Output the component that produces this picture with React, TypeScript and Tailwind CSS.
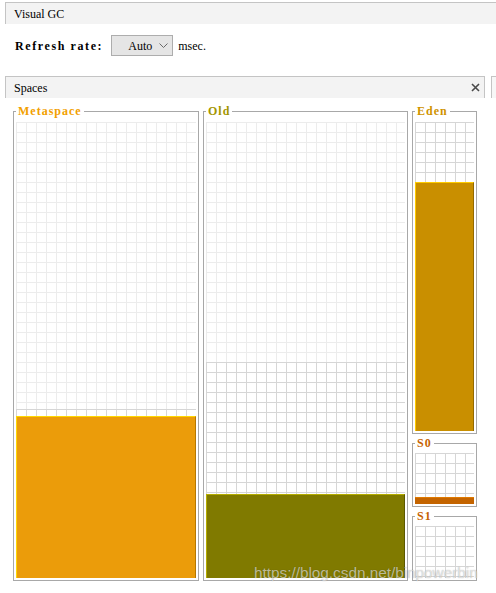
const lightGrid =
  "[background-image:linear-gradient(to_right,#ececec_1px,transparent_1px),linear-gradient(to_bottom,#ececec_1px,transparent_1px)] [background-size:10px_10px]";
const darkGrid =
  "[background-image:linear-gradient(to_right,#d6d6d6_1px,transparent_1px),linear-gradient(to_bottom,#d6d6d6_1px,transparent_1px)] [background-size:10px_10px]";

interface SpaceProps {
  label: string;
  labelClass: string;
  free: number;
  used: number;
  fillClass: string;
  className: string;
  top?: string;
  body?: number;
}

function Space({ label, labelClass, free, used, fillClass, className, top = "pt-[4px]", body }: SpaceProps) {
  return (
    <fieldset className={`flex flex-col min-w-0 border border-[#a8a8a8] px-[2px] pb-[2px] ${top} ${className}`}>
      <legend className={`px-[2px] text-[12px] leading-[13px] font-bold tracking-[1px] ${labelClass}`}>{label}</legend>
      {free > 0 && <div className={lightGrid} style={{ height: free }} />}
      <div
        className={`${body ? "shrink-0" : "flex-1"} flex flex-col justify-end ${darkGrid}`}
        style={body ? { height: body, minHeight: body } : undefined}
      >
        {used > 0 && <div className={`shrink-0 ${fillClass}`} style={{ height: used }} />}
      </div>
    </fieldset>
  );
}

export default function App() {
  return (
    <div className="relative w-[496px] h-[593px] overflow-hidden bg-white text-black font-['Liberation_Serif',serif]">
      <div className="pt-[2px] pl-[5px]">
        <div className="h-[22px] flex items-center border-t border-l border-[#c4c4c4] bg-[#f3f3f3] pl-[8px] text-[12px]">
          Visual GC
        </div>
      </div>

      <div className="mt-[11px] pl-[15px] h-[21px] flex items-center">
        <span className="text-[12px] font-bold tracking-[1.6px]">Refresh rate:</span>
        <div className="ml-[8px] w-[62px] h-[21px] flex items-center border border-[#adadad] bg-[#e5e5e5] pl-[16px] text-[12px]">
          <span>Auto</span>
          <svg className="ml-[7px]" width="9" height="6" viewBox="0 0 9 6">
            <polyline points="0.5,0.5 4.5,4.5 8.5,0.5" fill="none" stroke="#6a6a6a" strokeWidth="1" />
          </svg>
        </div>
        <span className="ml-[5px] text-[12px]">msec.</span>
      </div>

      <div className="mt-[20px] pl-[5px] flex h-[22px]">
        <div className="w-[480px] flex items-center justify-between border-t border-l border-r border-[#c4c4c4] bg-[#f3f3f3] pl-[8px] pr-[4px] text-[12px]">
          <span>Spaces</span>
          <svg width="9" height="9" viewBox="0 0 9 9">
            <path d="M1 1 L8 8 M8 1 L1 8" stroke="#4a4a4a" strokeWidth="1.6" />
          </svg>
        </div>
        <div className="ml-[6px] flex-1 border-t border-l border-[#c4c4c4] bg-[#f7f7f7]" />
      </div>

      <div className="mt-[7px] pl-[13px] h-[476px] flex gap-[4px]">
        <Space
          label="Metaspace"
          labelClass="text-[#f2a000]"
          free={287}
          used={162}
          className="w-[186px]"
          fillClass="bg-[#eb9c0a] border-t border-l border-r border-t-[#ffd800] border-l-[#ffd800] border-r-[#b67800]"
        />
        <Space
          label="Old"
          labelClass="text-[#a39600]"
          free={240}
          used={84}
          className="w-[205px]"
          fillClass="bg-[#807a00] border-t border-l border-r border-t-[#b5ad00] border-l-[#b5ad00] border-r-[#5c5800]"
        />
        <div className="w-[65px] flex flex-col gap-[3px]">
          <Space
            label="Eden"
            labelClass="text-[#cf9300]"
            free={0}
            used={249}
            className="flex-1"
            fillClass="bg-[#c98f00] border-t border-l border-r border-t-[#ffcc00] border-l-[#ffcc00] border-r-[#946a00]"
          />
          <Space
            label="S0"
            labelClass="text-[#c66200]"
            free={0}
            used={7}
            top="pt-[3px]"
            body={51}
            className="h-[70px] shrink-0"
            fillClass="bg-[#c46400] border-t border-t-[#e07a00]"
          />
          <Space
            label="S1"
            labelClass="text-[#c66200]"
            free={0}
            used={0}
            top="pt-[3px]"
            body={52}
            className="h-[71px] shrink-0"
            fillClass=""
          />
        </div>
      </div>

      <div className="absolute left-[254px] top-[562px] text-[15.3px] font-['Liberation_Sans',sans-serif] text-white/60 [text-shadow:0_0_1px_rgba(0,0,0,0.35)]">
        https://blog.csdn.net/binpowerbin
      </div>
    </div>
  );
}
